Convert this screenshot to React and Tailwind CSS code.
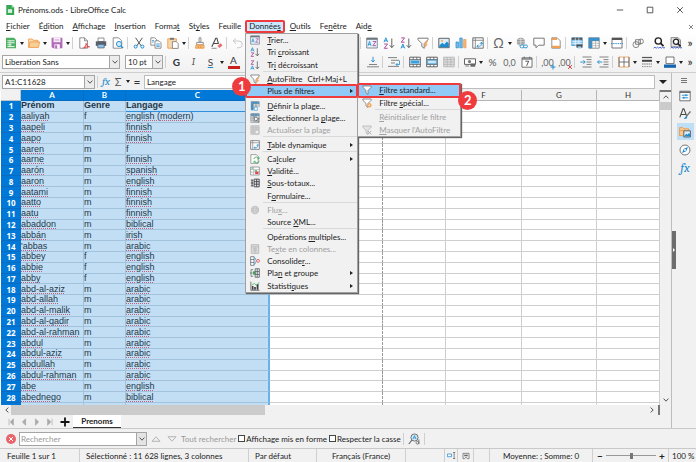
import { Fragment } from 'react'

const ROWS = [
  ['Prénom', 'Genre', 'Langage'],
  ['aaliyah', 'f', 'english (modern)'],
  ['aapeli', 'm', 'finnish'],
  ['aapo', 'm', 'finnish'],
  ['aaren', 'm', 'f'],
  ['aarne', 'm', 'finnish'],
  ['aarón', 'm', 'spanish'],
  ['aaron', 'm', 'english'],
  ['aatami', 'm', 'finnish'],
  ['aatto', 'm', 'finnish'],
  ['aatu', 'm', 'finnish'],
  ['abaddon', 'm', 'biblical'],
  ['abbán', 'm', 'irish'],
  ["'abbas", 'm', 'arabic'],
  ['abbey', 'f', 'english'],
  ['abbie', 'f', 'english'],
  ['abby', 'f', 'english'],
  ['abd-al-aziz', 'm', 'arabic'],
  ['abd-allah', 'm', 'arabic'],
  ['abd-al-malik', 'm', 'arabic'],
  ['abd-al-qadir', 'm', 'arabic'],
  ['abd-al-rahman', 'm', 'arabic'],
  ['abdul', 'm', 'arabic'],
  ['abdul-aziz', 'm', 'arabic'],
  ['abdullah', 'm', 'arabic'],
  ['abdul-rahman', 'm', 'arabic'],
  ['abe', 'm', 'english'],
  ['abednego', 'm', 'biblical'],
]

// the two columns under the open menu carry no letter
const COLS = ['A', 'B', 'C', '', '', 'F', 'G', 'H']
const COL_WIDTHS = ['w-[63px]', 'w-[42px]', 'w-[144px]', 'w-[113px]', 'w-[63px]', 'w-[76px]', 'w-[75px]', '']

const K = '#4a4a4a'
const B = '#1e8bcd'
const O = '#ee9b4b'

// small drawings on a 12x12 grid
const ICONS = {
  calc: <><path d="M1 .8h8l2 2v8.4H1z" fill="#4caf61" /><path d="M2.4 3.8h7.2M2.4 5.8h7.2M2.4 7.8h4M2.4 9.6h7.2" stroke="#fff" strokeWidth=".9" /><path d="M5 3.5V10" stroke="#fff" strokeWidth=".6" /></>,
  folder: <><path d="M.7 10.4V2h3.5l1 1.3h4.7v2" fill="#fbe1b9" stroke={O} strokeWidth=".9" /><path d="M.7 10.4 2 4.9h9.6L10.4 10.4z" fill="#f8cf95" stroke={O} strokeWidth=".9" /></>,
  save: <><path d="M.6.8h10.8v10.5H2L.6 10z" fill="#b269b8" /><path d="M2.6.8h6.8v4.4H2.6z" fill="#fff" /><path d="M3.4 7.3h5.4v4H3.4z" fill="#fff" /><path d="M4.3 8.4h1.6v2.9H4.3zM3.5 2.3h5M3.5 3.8h5" fill="#b269b8" stroke="#b269b8" strokeWidth=".5" /></>,
  pdf: <><path d="M1.8.8h4.7l3 3v7.4H1.8z" fill="#fff" stroke="#777" strokeWidth=".8" /><path d="M6.5.8v3h3" fill="none" stroke="#777" strokeWidth=".8" /><path d="M5.5 11c1.8-1 2.6-3 2.6-4.6.8 2.5 2 3.4 3.4 3.4-2 0-4 .2-6 1.2z" fill="none" stroke="#e2444a" strokeWidth="1" /></>,
  print: <><path d="M3 1h6v3.5H3z" fill="#fff" stroke="#777" strokeWidth=".8" /><path d="M.8 4.3h10.4v4.6H.8z" fill="#58606a" /><path d="M2.8 7.3h6.4v3.6H2.8z" fill="#8cc4ef" stroke="#58606a" strokeWidth=".8" /></>,
  preview: <><path d="M1.2.8h5.5l3 3v7.4H1.2z" fill="#fff" stroke="#777" strokeWidth=".8" /><circle cx="7" cy="7" r="2.6" fill="#d3e9f8" stroke={B} strokeWidth=".9" /><path d="m8.9 8.9 2.3 2.3" stroke={B} strokeWidth="1.2" /></>,
  cut: <><path d="M2.6.8 8.3 9M9.4.8 3.7 9" stroke="#555" strokeWidth="1" /><circle cx="2.6" cy="9.6" r="1.5" fill="none" stroke={B} strokeWidth="1" /><circle cx="9.4" cy="9.6" r="1.5" fill="none" stroke={B} strokeWidth="1" /></>,
  copy: <><path d="M.8.8h4l2 2v5.4h-6z" fill="#fff" stroke="#777" strokeWidth=".8" /><path d="M5 3.8h4l2 2v5.4H5z" fill="#fff" stroke="#777" strokeWidth=".8" /><path d="M6.3 6.9h3.4M6.3 8.2h3.4M6.3 9.5h3.4M2 3.5h2M2 5h2" stroke={B} strokeWidth=".7" /></>,
  paste: <><path d="M.8 1.8h8.6v9.4H.8z" fill="#f7d9b0" stroke={O} strokeWidth=".9" /><path d="M3 .8h4v2H3z" fill="#777" /><path d="M5.4 4.6h3.8l2 2v4.8H5.4z" fill="#fff" stroke="#777" strokeWidth=".8" /></>,
  brush: <><path d="M5.1.8h1.8v4.5H5.1z" fill="#fff" stroke="#777" strokeWidth=".8" /><path d="M2.7 5.4h6.6v2.4H2.7z" fill="#fff" stroke="#777" strokeWidth=".8" /><path d="M2 8h8v3.2H1.5z" fill="#f4ba79" stroke={O} strokeWidth=".9" /><path d="M4.5 8.8v2.2M6.7 8.8v2.2" stroke="#d8843a" strokeWidth=".6" /></>,
  clearFormat: <><path d="M.8 9.8 4.8 1.2h1.1l1.6 5.6M2.5 6.5h4.6" fill="none" stroke={K} strokeWidth="1.1" /><path d="m6.5 8.9 3-2.7 2 2-3 2.8z" fill="#e66a6e" /><path d="M.6 11.3h5" stroke={K} strokeWidth=".6" /></>,
  undo: <path d="M4 1.3 1.2 4 4 6.7M1.3 4h5.6a3.3 3.3 0 0 1 0 6.8H5" fill="none" stroke="#c8c8c8" strokeWidth="1" />,
  sort: <><path d="M.7 1h10.6v10H.7z" fill="#e8f2fa" stroke="#6c7780" strokeWidth=".8" /><path d="M.7 1h10.6v1.8H.7z" fill="#6c7780" /><path d="m2 8.8 1.5-4.4L5 8.8M2.5 7.4h2" fill="none" stroke={B} strokeWidth=".8" /><path d="M6.8 4.5H10L6.8 8.7H10" fill="none" stroke="#a43d92" strokeWidth=".8" /></>,
  sortAsc: <><path d="M1 5.2 2.9.8l1.8 4.4M1.6 3.8h2.5" fill="none" stroke={B} strokeWidth=".9" /><path d="M1.2 7h3.4l-3.4 4.3h3.4" fill="none" stroke="#a43d92" strokeWidth=".9" /><path d="M8.8 1.5v9M6.6 8.2l2.2 2.4L11 8.2" fill="none" stroke="#555" strokeWidth=".9" /></>,
  sortDesc: <><path d="M1.2.9h3.4L1.2 5.2h3.4" fill="none" stroke="#a43d92" strokeWidth=".9" /><path d="m1 11.4 1.9-4.4 1.8 4.4M1.6 10h2.5" fill="none" stroke={B} strokeWidth=".9" /><path d="M8.8 1.5v9M6.6 8.2l2.2 2.4L11 8.2" fill="none" stroke="#555" strokeWidth=".9" /></>,
  filter: <path d="M1 1.2h10v1.5L7.2 6.5v4.8L4.8 9.5v-3L1 2.7z" fill="#fff" stroke="#6b6b6b" strokeWidth=".9" />,
  autoFilter: <><path d="M1 1.2h10v1.5L7.2 6.5v4.8L4.8 9.5v-3L1 2.7z" fill="#fff" stroke="#6b6b6b" strokeWidth=".9" /><path d="m11.3 3.8-2.2 3.4h1.8L7.2 11.4 8.3 8H6.8l2.4-4.2z" fill="#f2a65c" /></>,
  specialFilter: <><path d="M1 1.2h10v1.5L7.2 6.5v4.8L4.8 9.5v-3L1 2.7z" fill="#fff" stroke="#6b6b6b" strokeWidth=".9" /><circle cx="8.8" cy="8.6" r="2.7" fill="#f2a65c" /><circle cx="8.8" cy="8.6" r=".9" fill="#fff" /></>,
  hideFilter: <><path d="M1 1.2h10v1.5L7.2 6.5v4.8L4.8 9.5v-3L1 2.7z" fill="#e2e2e2" stroke="#b3b3b3" strokeWidth=".9" /><path d="m7 7 4.2 4.2M11.2 7 7 11.2" stroke="#a8a8a8" strokeWidth="1.1" /></>,
  image: <><path d="M.8 1.3h10.4v9.4H.8z" fill="#dceefb" stroke="#555" strokeWidth=".9" /><path d="m1.3 8.5 3-2.8 2 1.8 2.5-3 2 2v3.7H1.3z" fill={B} /><circle cx="4" cy="3.8" r="1.1" fill="#f3b35b" /></>,
  chart: <><path d="M1 5h2.4v5.8H1z" fill="#7cbce8" stroke={B} strokeWidth=".7" /><path d="M4.8 1h2.4v9.8H4.8z" fill="#7cbce8" stroke={B} strokeWidth=".7" /><path d="M8.6 2.500H11v8.300H8.6z" fill="#f4b678" stroke={O} strokeWidth=".7" /></>,
  pivot: <><path d="M.8.8h10.4v10.4H.8z" fill="#fff" stroke="#666" strokeWidth=".9" /><path d="M.8 3.3h10.4M3.3.8v10.4" stroke="#777" strokeWidth=".8" /><path d="M5 9.2h2.6c1.5 0 1.8-1 1.8-3.6M8 6.8l1.4-1.6 1.3 1.6M6.3 7.8 4.9 9.2l1.4 1.4" fill="none" stroke={B} strokeWidth=".9" /></>,
  link: <><circle cx="4.8" cy="4.8" r="4" fill="#9a9a9a" /><path d="M.8 4.8h8M4.8.8v8M2 2.4h5.6M2 7.2h5.6" stroke="#fff" strokeWidth=".5" /><rect x="4.2" y="8" width="3.8" height="2.8" rx="1.3" fill="#fff" stroke={B} strokeWidth=".9" /><rect x="7.6" y="8" width="3.8" height="2.8" rx="1.3" fill="#fff" stroke={B} strokeWidth=".9" /></>,
  comment: <path d="M.8 1.2h10.4v7H5.6L3 10.8V8.2H.8z" fill="#fff" stroke="#6b6b6b" strokeWidth=".9" />,
  header: <><path d="M1.8.8h5.4l3 3v7.4H1.8z" fill="#fff" stroke="#777" strokeWidth=".8" /><path d="M2 .9h5v2H2zM2 8.8h8v2.2H2z" fill="#f0a050" /></>,
  printArea: <><path d="M.8.8h10.4v7.7H.8z" fill="#8fc7ee" stroke={B} strokeWidth=".7" /><path d="M.8.8h10.4v2H.8z" fill="#555" /><path d="M4.3.8v8M7.8.8v6M.8 4.7h10.4M.8 6.6h10.4" stroke="#fff" strokeWidth=".6" /><path d="M5.5 7.5h6v3.2h-6z" fill="#4a4a4a" /><path d="M6.8 9.3h3.4v2.2H6.8z" fill="#9dcff2" /></>,
  freeze: <><path d="M.8.8h10.4v10.4H.8z" fill="#fff" stroke="#777" strokeWidth=".8" /><path d="M.8.8h10.4v3.1H.8zM.8 3.9h3.3v7.3H.8z" fill="#2a93db" /><path d="M4.1.8v10.4M7.6.8v10.4M.8 3.9h10.4M.8 6.3h10.4M.8 8.7h10.4" stroke="#888" strokeWidth=".5" /></>,
  split: <><path d="M1 1h10v10H1z" fill="#fff" stroke="#6b6b6b" strokeWidth=".9" /><path d="M1 1h10v2H1z" fill="#555" /><path d="M0 6.6h12" stroke={B} strokeWidth=".9" strokeDasharray="1.4 .8" /></>,
  shapes: <><circle cx="4" cy="7.6" r="3" fill="none" stroke="#777" strokeWidth=".9" /><path d="M3.6 2.7h4.8v4.6H3.6z" fill="none" stroke="#777" strokeWidth=".9" /><circle cx="9" cy="4.4" r="2.4" fill="none" stroke="#777" strokeWidth=".9" /></>,
  find: <><circle cx="5.3" cy="4" r="3.1" fill="#fff" stroke="#222" strokeWidth="1.4" /><path d="m7.5 6.2 3 3" stroke="#222" strokeWidth="1.7" /><path d="m.6 11.2 1.3-1 1.3 1 1.3-1 1.3 1 1.3-1 1.3 1 1.3-1 1.3 1 1.2-1" fill="none" stroke="#3454c5" strokeWidth=".9" /></>,
  findPage: <><path d="M1 .6h7l2.5 2.5v6.8H1z" fill="#e2e2e2" stroke="#777" strokeWidth=".8" /><circle cx="6" cy="4.8" r="2.6" fill="#fff" stroke="#222" strokeWidth="1.3" /><path d="m7.8 6.6 2.8 2.8" stroke="#222" strokeWidth="1.5" /><path d="m.6 11.2 1.3-1 1.3 1 1.3-1 1.3 1 1.3-1 1.3 1 1.3-1 1.3 1 1.2-1" fill="none" stroke="#3454c5" strokeWidth=".9" /></>,
  alignBottom: <><path d="M0 10.8h12" stroke="#777" strokeWidth=".9" /><path d="M2 8.5h8" stroke="#777" strokeWidth=".9" /><path d="M6 .8v5M4.2 4.2 6 6l1.8-1.8" fill="none" stroke={B} strokeWidth=".9" /></>,
  wrap: <><path d="M0 1.6h9M3 4.3h8M3 7h4M0 10.4h11" stroke="#777" strokeWidth=".9" /><path d="M11.5 4.5v4H8M9.5 7 8 8.5 9.5 10" fill="none" stroke={B} strokeWidth=".8" /></>,
  mergeCenter: <><path d="M.7 1.2h10.6v9.6H.7z" fill="#fff" stroke="#555" strokeWidth=".9" /><path d="M.7 3.6h10.6M.7 8.4h10.6M4.2 1.2v2.4M7.8 1.2v2.4M4.2 8.4v2.4M7.8 8.4v2.4" stroke="#555" strokeWidth=".8" /><path d="M1.6 4.4h8.8v3.2H1.6z" fill="#3c9fe0" /></>,
  merge: <><path d="M.7 1.2h10.6v9.6H.7z" fill="#fff" stroke="#555" strokeWidth=".9" /><path d="M.7 3.6h10.6M.7 8.4h10.6M4.2 1.2v2.4M7.8 1.2v2.4M4.2 8.4v2.4M7.8 8.4v2.4" stroke="#555" strokeWidth=".8" /><path d="M1.6 4.2h8.8v3.6H1.6z" fill="#cde7f8" stroke={B} strokeWidth=".7" /></>,
  unmerge: <><path d="M.7 1.2h10.6v9.6H.7z" fill="#ddd" stroke="#b5b5b5" strokeWidth=".9" /><path d="M.7 3.6h10.6M.7 6h10.6M.7 8.4h10.6M4.2 1.2v9.6M7.8 1.2v9.6" stroke="#b5b5b5" strokeWidth=".8" /></>,
  currency: <><path d="M.5 2.8h11v5.6H.5z" fill="#fff" stroke="#555" strokeWidth=".9" /><circle cx="5.5" cy="5.6" r="1.6" fill="#777" /><path d="M6.5 7.5h4.7v3.2H6.5z" fill="#666" /><path d="M1.2 10h3.8" stroke="#777" strokeWidth=".9" /></>,
  date: <><path d="M1 1.8h10v9.4H1z" fill="#fff" stroke="#666" strokeWidth=".9" /><path d="M1 3h10" stroke="#666" strokeWidth="1.2" /><path d="M3.3.6v1.8M8.7.6v1.8" stroke="#666" strokeWidth=".9" /><path d="M4.3 5.2h3.4L5.6 9.8" fill="none" stroke="#444" strokeWidth=".9" /></>,
  indentMore: <><path d="M2.5 1h9M6.5 3.6h5M6.5 6h5M6.5 8.4h5M2.5 11h9" stroke="#777" strokeWidth=".9" /><path d="M.3 6h4.8M3.4 4.2 5.2 6 3.4 7.8" fill="none" stroke={B} strokeWidth=".9" /></>,
  indentLess: <><path d="M2.5 1h9M6.5 3.6h5M6.5 6h5M6.5 8.4h5M2.5 11h9" stroke="#777" strokeWidth=".9" /><path d="M.5 6h4.8M2.3 4.2.5 6l1.8 1.8" fill="none" stroke={B} strokeWidth=".9" /></>,
  borders: <><path d="M1 1h10v10H1z" fill="#fff" stroke={O} strokeWidth=".8" /><path d="M6 1v10M1 6h10M1 1v10M11 1v10" stroke="#666" strokeWidth=".9" /></>,
  lineStyle: <><path d="M1 1.5h10" stroke="#555" strokeWidth="1.2" /><path d="M1 4.8h10" stroke="#444" strokeWidth="2" /><path d="M1 8h10" stroke="#666" strokeWidth=".9" strokeDasharray="1.5 .7" /><path d="M1 10.6h10" stroke="#777" strokeWidth=".9" strokeDasharray="1 .7" /></>,
  borderColor: <><path d="M2 1h8v6.6H2z" fill="#fff" stroke="#666" strokeWidth=".9" /><path d="M0 8.5h12v3.3H0z" fill="#1665ad" /></>,
  range: <><path d="M1 .8h10v2.6H1z" fill="#3c9fe0" /><path d="M1 3.4h2.8v7.8H1z" fill="#3c9fe0" /><path d="M1 .8h10v6.4M3.8.8v10.4M7.2.8v6.4M1 3.4h10M1 6h9M1 8.6h4" fill="none" stroke="#6d7780" strokeWidth=".7" /><path d="M5.2 7.4h3.6v3.8H5.2z" fill="#fff" stroke={B} strokeWidth=".7" /></>,
  rangeSelect: <><path d="M1 .8h10v2.6H1z" fill="#58a9dd" /><path d="M1 .8h10v10.4H1zM3.8.8v10.4M7.2.8v10.4M1 3.4h10M1 6h10M1 8.6h10" fill="none" stroke="#6d7780" strokeWidth=".7" /><path d="m5 4.4 6 2.6-2.5.8 2 2.8-1 .7-2-2.8-1.5 1.8z" fill="#fff" stroke="#444" strokeWidth=".7" /></>,
  rangeRefresh: <><path d="M1 .8h10v10.4H1zM3.8.8v10.4M7.2.8v10.4M1 3.4h10M1 6h10M1 8.6h10" fill="#d5d5d5" stroke="#b9b9b9" strokeWidth=".8" /><circle cx="8.4" cy="8.4" r="2.5" fill="#eee" stroke="#b5b5b5" strokeWidth=".8" /></>,
  recalc: <><path d="M1 .8h6.8l2 2v8.4H1z" fill="#fff" stroke="#777" strokeWidth=".8" /><path d="M4.5 6a3.2 3.2 0 0 1 6-.5M10.8 3.8v2h-2M11 8.2a3.2 3.2 0 0 1-6 .6M4.8 10.8V8.7h2" fill="none" stroke="#3daf57" strokeWidth="1" /></>,
  validity: <><path d="M.8 1.2h10.4v9.6H.8z" fill="#fff" stroke="#777" strokeWidth=".8" /><path d="M.8 4.2h10.4M.8 7.4h10.4M4.2 1.2v9.6" stroke="#999" strokeWidth=".6" /><path d="M2 2.5h1.4M5.5 5.8h3" stroke="#3daf57" strokeWidth="1.3" /><path d="M6.2 6.6h4v3.2h-4z" fill="#dd484e" /></>,
  subtotal: <path d="M1 2.5h3M1 6h3M1 9.5h3M2.5 2.5v7M5 1.4h6v9.2H5zM5 4.4h6M5 7.4h6M8 1.4v9.2" fill="none" stroke="#3d4147" strokeWidth="1.1" />,
  stream: <><circle cx="6" cy="6" r="5" fill="#c2c2c2" /><path d="M1.5 6h9M6 1.5v9M2.5 3.4h7M2.5 8.6h7" stroke="#dedede" strokeWidth=".6" /></>,
  textCols: <><path d="M1.5.8h9v10.4h-9z" fill="#dcdcdc" stroke="#b4b4b4" strokeWidth="1" /><path d="M1.5 3.4h9M3.5 5.8h5M3.5 8.2h5M6 3.4v7.8" stroke="#b4b4b4" strokeWidth=".9" /></>,
  consolidate: <><path d="M.8.8h4v10.4h-4zM.8 4.2h4M.8 7.7h4" fill="#fff" stroke="#5c666f" strokeWidth=".9" /><path d="M5 1.6c1.8.4 1.5 3.5 3 4.2C6.6 6.5 6.8 9.8 5 10.2" fill="none" stroke={B} strokeWidth=".9" /><circle cx="9.7" cy="5.8" r="1.7" fill="#fff" stroke="#dd484e" strokeWidth="1" /></>,
  outline: <><path d="M3.8 2H1.2v8h2.6M0 6h3" fill="none" stroke="#5c666f" strokeWidth=".9" /><path d="M3.4 4h3v4h-3z" fill="#3daf57" /><path d="M6.2.9h5v10.2h-5zM6.2 4.3h5M6.2 7.7h5M8.7.9v10.2" fill="none" stroke="#4b5258" strokeWidth=".9" /></>,
  stats: <><path d="M1 .8v10.4h10.4" fill="none" stroke="#555" strokeWidth=".9" /><path d="M2.2 6h2v4.6h-2zM5 7.2h2v3.4H5zM8 3.5h2.2v7.1H8z" fill="#3d4147" /><path d="m2 5 3.3-2.2 2.4 2.6 3.4-4" fill="none" stroke="#3daf57" strokeWidth=".9" /></>,
  properties: <><path d="M.8 1.2h10.4v9.6H.8z" fill="#fff" stroke="#666" strokeWidth=".9" /><path d="M.8 2.2h10.4" stroke="#666" strokeWidth="1.5" /><path d="M2.8 5.2h6.4M2.8 7.8h6.4" stroke={B} strokeWidth=".9" /><path d="M7 4.2v2M4.8 6.8v2" stroke={B} strokeWidth="1.2" /></>,
  styles: <><path d="M.8 9.4 4 .9h.9l3 7.7M2 6.5h4.8" fill="none" stroke={K} strokeWidth="1.1" /><path d="m11.5 3.4-4.2 5" stroke="#777" strokeWidth="1.4" /><path d="M4.5 11c2.3.4 4-.2 3.6-2.4C6 8 6 10.4 4.5 11z" fill={B} /></>,
  gallery: <><path d="M.6 9.6V1.6h3.2l.9 1.2h5v2" fill="#f9cb94" stroke={O} strokeWidth=".9" /><path d="M.6 9.6v-5h5v5z" fill="#f9cb94" stroke={O} strokeWidth=".9" /><path d="M4.8 4.8h6.6v6.2H4.8z" fill="#dceefb" stroke="#555" strokeWidth=".9" /><path d="m5.3 10 2-2.2 1.2 1L10 7l1 1.2v2.3H5.3z" fill={B} /></>,
  navigator: <><circle cx="6" cy="6" r="5" fill="#fff" stroke="#777" strokeWidth="1" /><path d="M9 3 7.2 7.2 3 9l1.8-4.2z" fill={B} /><circle cx="6" cy="6" r="1" fill="#fff" /></>,
  findReplace: <><circle cx="6.5" cy="4.5" r="3.6" fill="#cfe6f7" stroke="#666" strokeWidth=".9" /><path d="M4 7 .8 11" stroke="#666" strokeWidth="1.2" /><path d="M5 6 6.5 2.6 8 6M5.6 4.9h1.9" fill="none" stroke={B} strokeWidth=".7" /><path d="M10.9 6.5v4.6M10.9 9.8a1.4 1.4 0 1 1 0-.2" fill="none" stroke="#555" strokeWidth=".8" /></>,
  insertMode: <><path d="M.5 4h5.5v3.6H.5z" fill="#fff" stroke={B} strokeWidth="1" /><path d="M8 2h3M8 10h3M9.5 2v8" stroke="#555" strokeWidth=".9" /></>,
  docSave: <><path d="M1.5 2h9v8h-2L6 8 3.5 10h-2z" fill="#f4f4f4" stroke="#555" strokeWidth="1" /><path d="M3.3 4h5.4v2.4H3.3z" fill="#666" /></>,
}

const TEXT_ICONS = {
  omega: { text: 'Ω', cls: 'text-[13px] text-[#666]' },
  bold: { text: 'G', cls: 'text-[10px] font-bold text-[#333]' },
  italic: { text: 'I', cls: 'text-[10px] italic font-serif text-[#555]' },
  underline: { text: 'S', cls: 'text-[10px] text-[#444] underline decoration-[#1e8bcd]' },
  fontColor: { text: 'A', cls: 'text-[10px] text-[#333] border-b-3 border-[#c9211e] w-[12px] text-center' },
  percent: { text: '%', cls: 'text-[10px] text-[#555]' },
  number: { text: '0,0', cls: 'text-[9px] text-[#666]' },
  addDecimal: { text: ',00', cls: 'text-[9px] text-[#666]', mark: 'M3 .5v5M.5 3h5', color: B },
  delDecimal: { text: ',00', cls: 'text-[9px] text-[#666]', mark: 'm1 1 4 4M5 1 1 5', color: '#dd484e' },
}

function Icon({ name, className = 'size-3' }) {
  return <svg viewBox="0 0 12 12" className={`${className} shrink-0`} aria-hidden="true">{ICONS[name]}</svg>
}

// '|' draws a separator, a trailing '+' adds a drop-down arrow
const BAR1_LEFT = ['calc+', 'folder+', 'save+', '|', 'pdf', 'print', 'preview', '|', 'cut', 'copy', 'paste+', '|', 'brush', 'clearFormat', '|', 'undo']
const BAR1_RIGHT = ['|', 'sort', 'sortAsc', 'sortDesc', 'autoFilter', '|', 'image', 'chart', 'pivot', '|', 'omega+', 'link', 'comment', 'header', '|', 'printArea', 'freeze+', 'split', '|', 'shapes', ' ', 'find', 'findPage']
const BAR2_LEFT = ['|', 'bold', 'italic', 'underline+', 'fontColor']
const BAR2_RIGHT = ['alignBottom', '|', 'wrap', '|', 'mergeCenter', 'merge', 'unmerge', '|', 'currency+', 'percent', 'number', 'date', '|', 'addDecimal', 'delDecimal', '|', 'indentMore', 'indentLess', '|', 'borders+', 'lineStyle+', 'borderColor+']

function Caret({ className = '' }) {
  return <span className={`h-0 w-0 border-x-2 border-t-3 border-x-transparent border-t-[#222] ${className}`} />
}

function ToolGroup({ items }) {
  return (
    <div className="flex shrink-0 items-center">
      {items.map((item, i) => {
        if (item === '|') return <span key={i} className="mx-[1px] h-3 w-[2px] border-l border-[#d0d0d0]" />
        if (item === ' ') return <span key={i} className="w-1" />
        const name = item.replace('+', '')
        const text = TEXT_ICONS[name]
        return (
          <Fragment key={i}>
            <button type="button" aria-label={name} className="relative flex h-4 w-[17px] shrink-0 items-center justify-center">
              {text ? <span className={`leading-[11px] ${text.cls}`}>{text.text}</span> : <Icon name={name} />}
              {text?.mark && <svg viewBox="0 0 6 6" className="absolute right-0 bottom-0 size-[6px]"><path d={text.mark} stroke={text.color} /></svg>}
            </button>
            {item.endsWith('+') && (
              <button type="button" aria-label={`${name} options`} className="flex h-4 w-[6px] items-center justify-center"><Caret /></button>
            )}
          </Fragment>
        )
      })}
    </div>
  )
}

// underscore goes before the access key
function Label({ text }) {
  const [before, after] = text.split('_')
  if (after === undefined) return text
  return <>{before}<span className="underline underline-offset-1">{after[0]}</span>{after.slice(1)}</>
}

const DATA_MENU = [
  { label: '_Trier...', icon: 'sort' },
  { label: 'Tri _croissant', icon: 'sortAsc' },
  { label: 'Tr_i décroissant', icon: 'sortDesc' },
  null,
  { label: '_AutoFiltre', icon: 'autoFilter', keys: 'Ctrl+Maj+L' },
  { label: 'Plus de filtres', arrow: true, open: true },
  null,
  { label: '_Définir la plage...', icon: 'range' },
  { label: 'Sélectionner la _plage...', icon: 'rangeSelect' },
  { label: 'Actualiser la plage', icon: 'rangeRefresh', disabled: true },
  null,
  { label: '_Table dynamique', icon: 'pivot', arrow: true },
  null,
  { label: 'Ca_lculer', icon: 'recalc', arrow: true },
  { label: '_Validité...', icon: 'validity' },
  { label: '_Sous-totaux...', icon: 'subtotal' },
  { label: 'F_ormulaire...' },
  null,
  { label: 'Flu_x...', icon: 'stream', disabled: true },
  { label: 'Source _XML...' },
  null,
  { label: 'Opérations _multiples...' },
  { label: 'Te_xte en colonnes...', icon: 'textCols', disabled: true },
  { label: 'Consolide_r...', icon: 'consolidate' },
  { label: 'Pla_n et groupe', icon: 'outline', arrow: true },
  { label: 'Statisti_ques', icon: 'stats', arrow: true },
]

const FILTER_MENU = [
  { label: '_Filtre standard...', icon: 'filter', open: true },
  { label: 'Filtre _spécial...', icon: 'specialFilter' },
  null,
  { label: '_Réinitialiser le filtre', disabled: true },
  { label: "_Masquer l'AutoFiltre", icon: 'hideFilter', disabled: true },
]

function Badge({ children, className }) {
  return <span className={`absolute z-10 flex size-[19px] items-center justify-center rounded-full bg-[#ef3b3d] text-[13px] font-bold text-white ${className}`}>{children}</span>
}

function Menu({ items, className, children }) {
  return (
    <ul className={`absolute flex flex-col border border-[#a0a0a0] bg-[#f1f1f1] shadow-[1px_1px_1px_#666] ${className}`}>
      {items.map((it, i) => it === null ? (
        <li key={i} className="ml-[17px] h-[2px] shrink-0 border-t border-[#dadada]" />
      ) : (
        <li key={i} className="relative flex min-h-0 flex-1">
          <button type="button" disabled={it.disabled}
            className={`flex w-full items-center whitespace-nowrap ${it.open ? 'bg-[#91c9f7]' : ''} ${it.disabled ? 'text-[#a0a0a0]' : 'text-[#222]'}`}>
            <span className="flex w-[21px] shrink-0 justify-center pr-1">{it.icon && <Icon name={it.icon} className="size-[10px]" />}</span>
            <span><Label text={it.label} /></span>
            {it.keys && <span className="ml-[5px]">{it.keys}</span>}
            {it.arrow && <span className="ml-auto mr-1 h-0 w-0 border-y-2 border-l-3 border-y-transparent border-l-[#222]" />}
          </button>
          {it.open && <span className="pointer-events-none absolute -inset-x-[1px] -inset-y-[1px] rounded-[2px] border-2 border-[#ef3b3d]" />}
          {it.open && it.arrow && children}
        </li>
      ))}
    </ul>
  )
}

const MENU_BAR = ['_Fichier', 'É_dition', '_Affichage', '_Insertion', 'Forma_t', 'St_yles', 'Feuille', 'Donnée_s', '_Outils', 'Fe_nêtre', 'Aid_e']

function MenuBar() {
  return (
    <nav className="flex h-[13px] shrink-0 items-center bg-white pl-[1px]">
      {MENU_BAR.map(m => (
        <div key={m} className="relative">
          {m === 'Donnée_s' ? (
            <>
              <button type="button" className="h-[13px] rounded-[2px] border-2 border-[#ef3b3d] bg-[#cce8ff] px-[2px] leading-[9px]"><Label text={m} /></button>
              <Menu items={DATA_MENU} className="top-full left-0 z-20 h-[260px] w-[113px]">
                <Menu items={FILTER_MENU} className="-top-[2px] left-full z-20 h-[54px] w-[104px]" />
                <Badge className="-top-[8px] -left-[14px]">1</Badge>
                <Badge className="top-[6px] -right-[120px] z-30">2</Badge>
              </Menu>
            </>
          ) : (
            <button type="button" className="h-[13px] pr-1 pl-[5px] leading-[13px]"><Label text={m} /></button>
          )}
        </div>
      ))}
      <button type="button" aria-label="Fermer le document" className="ml-auto mr-[2px]">
        <svg viewBox="0 0 6 6" className="size-[6px]"><path d="m1 1 4 4M5 1 1 5" stroke="#777" strokeWidth=".9" /></svg>
      </button>
    </nav>
  )
}

function Chevron({ className = '' }) {
  return <svg viewBox="0 0 6 4" className={`h-1 w-[6px] ${className}`} aria-hidden="true"><path d="m.6.6 2.4 2.6L5.4.6" fill="none" stroke="#555" strokeWidth="1" /></svg>
}

function Combo({ label, value, className }) {
  return (
    <div className={`flex h-[14px] shrink-0 items-stretch border border-[#a5a5a5] bg-white ${className}`}>
      <input aria-label={label} defaultValue={value} className="w-0 min-w-0 flex-1 pl-[2px] outline-none" />
      <button type="button" aria-label={`${label} : liste`} className="flex w-[10px] items-center justify-center border-l border-[#a5a5a5] bg-[#ececec]"><Chevron /></button>
    </div>
  )
}

function FormulaBar() {
  return (
    <div className="flex h-[17px] shrink-0 items-center bg-[#f1f1f1] pl-[2px]">
      <Combo label="Zone de nom" value="A1:C11628" className="w-[93px]" />
      <span className="ml-[2px] h-3 border-l border-[#d0d0d0]" />
      <button type="button" className="ml-[3px] w-[10px] font-serif text-[11px] leading-none text-[#1e8bcd] italic">fx</button>
      <button type="button" className="ml-[2px] w-[10px] text-[11px] leading-none text-[#555]">Σ</button>
      <Caret className="ml-[3px]" />
      <button type="button" className="ml-[3px] w-[8px] text-[12px] leading-none text-[#333]">=</button>
      <input aria-label="Ligne de saisie" defaultValue="Langage" className="ml-[3px] h-[14px] min-w-0 flex-1 border border-[#bdbdbd] bg-white pl-[2px] outline-none" />
      <button type="button" aria-label="Développer la barre de formule" className="flex w-4 justify-center">
        <span className="h-0 w-0 border-x-4 border-t-4 border-x-transparent border-t-[#222]" />
      </button>
    </div>
  )
}

function cellClass(c, r) {
  if (c === 3) return 'border-r [border-right-style:dashed] border-r-[#999] border-b-[#cfcfcf]'
  if (c > 3) return 'border-r border-[#cfcfcf]'
  if (c === 2) return r === 0 ? 'border-r-2 border-[#2d8fdd] bg-[#c2def4]' : 'border-r-2 border-r-[#69b1ea] border-b-[#a3c3dc] bg-[#c2def4]'
  return 'border-r border-[#a3c3dc] bg-[#c2def4]'
}

function Sheet() {
  return (
    <div className="flex min-h-0 flex-1 overflow-hidden pl-[1px]">
      <table className="h-full min-w-0 flex-1 table-fixed border-separate border-spacing-0 bg-white">
        <colgroup>
          <col className="w-[20px]" />
          {COL_WIDTHS.map((w, i) => <col key={i} className={w} />)}
        </colgroup>
        <thead>
          <tr className="h-[11px]">
            <td className="border-r border-b border-[#c4c4c4] bg-[#f1f1f1] p-0" />
            {COLS.map((c, i) => (
              <th key={i} className={`border-r border-b p-0 leading-[9px] ${i < 3 ? 'border-[#0a6cc0] bg-[#0078d7] font-bold text-white' : 'border-[#b5b5b5] bg-[#f1f1f1] font-normal text-[#333]'}`}>{c}</th>
            ))}
          </tr>
        </thead>
        <tbody className="font-['Liberation_Sans',sans-serif] text-[9px]">
          {ROWS.map((row, r) => (
            <tr key={r}>
              <th className="border-b border-[#0a6cc0] bg-[#0078d7] p-0 text-center font-['Noto_Sans',sans-serif] text-[8px] leading-[9px] font-bold text-white">{r + 1}</th>
              {COLS.map((_, i) => (
                <td key={i} className={`border-b p-0 leading-[9px] whitespace-nowrap text-[#24384a] ${r === 0 ? 'font-bold' : ''} ${cellClass(i, r)}`}>
                  {r > 0 && row[i] && row[i].length > 1
                    ? <span className="underline decoration-[#c0607a] decoration-dotted decoration-1 underline-offset-1">{row[i]}</span>
                    : row[i]}
                </td>
              ))}
            </tr>
          ))}
          <tr className="h-[2px]">
            <th className="bg-[#0078d7] p-0" />
            {COLS.map((_, i) => <td key={i} className={`p-0 ${cellClass(i, 1)}`} />)}
          </tr>
        </tbody>
      </table>
      <div className="flex w-[11px] shrink-0 flex-col items-center bg-[#f1f1f1]">
        <button type="button" aria-label="Défiler vers le haut" className="flex h-[12px] w-full items-center justify-center border-t-2 border-[#777]"><Chevron className="rotate-180" /></button>
        <span className="h-2 w-full bg-[#cbcbcb]" />
        <button type="button" aria-label="Défiler vers le bas" className="mt-auto flex h-[11px] w-full items-center justify-center"><Chevron /></button>
      </div>
    </div>
  )
}

function SheetTabs() {
  return (
    <>
      <div className="flex h-[10px] shrink-0 items-center bg-[#f1f1f1] pl-[2px]">
        <button type="button" aria-label="Défiler à gauche" className="flex w-[9px] justify-center"><Chevron className="rotate-90" /></button>
        <span className="h-full w-[254px] bg-[#cbcbcb]" />
        <button type="button" aria-label="Défiler à droite" className="ml-auto flex w-[10px] justify-center"><Chevron className="-rotate-90" /></button>
        <span className="mr-[11px] ml-[1px] h-full w-[2px] bg-[#777]" />
      </div>
      <div className="flex h-[13px] shrink-0 items-stretch bg-[#f1f1f1] pl-1">
        {['M2.5 1v8M8 1v8L4 5z', 'M7 1v8L3 5z', 'M3 1v8l4-4z', 'M2 1v8l4-4zM7.5 1v8'].map((d, i) => (
          <button key={i} type="button" aria-label={`Feuille : navigation ${i + 1}`} className="flex w-[13px] items-center justify-center">
            <svg viewBox="0 0 10 10" className="size-2"><path d={d} fill="#aaa" stroke="#aaa" strokeWidth=".9" /></svg>
          </button>
        ))}
        <button type="button" aria-label="Ajouter une feuille" className="flex w-[17px] items-center justify-center">
          <svg viewBox="0 0 10 10" className="size-[10px]"><path d="M5 .5v9M.5 5h9" stroke="#111" strokeWidth="1.8" /></svg>
        </button>
        <button type="button" className="w-12 border-b border-[#333] bg-white text-center font-bold leading-[12px]">Prenoms</button>
      </div>
    </>
  )
}

function Sidebar() {
  return (
    <aside className="relative flex w-[25px] shrink-0 flex-col items-center gap-[1px] border-l border-[#bdbdbd] bg-[#f1f1f1] pt-[3px]">
      <button type="button" aria-label="Paramètres du volet" className="mb-[2px] flex h-2 flex-col justify-center gap-[1px]">
        <span className="h-px w-[6px] bg-[#777]" /><span className="h-px w-[6px] bg-[#777]" /><span className="h-px w-[6px] bg-[#777]" />
      </button>
      {['properties', 'styles', 'gallery', 'navigator'].map(n => (
        <button key={n} type="button" aria-label={n} className={`ml-[2px] flex size-[17px] items-center justify-center ${n === 'gallery' ? 'bg-[#bfdff7]' : ''}`}>
          <Icon name={n} />
        </button>
      ))}
      <button type="button" className="ml-[2px] size-[17px] font-serif text-[13px] leading-none text-[#1e8bcd] italic">fx</button>
      <button type="button" aria-label="Masquer le volet" className="absolute top-[158px] left-0 flex h-[38px] w-1 items-center justify-center bg-[#6d6d6d]">
        <span className="h-0 w-0 border-y-2 border-l-2 border-y-transparent border-l-white" />
      </button>
    </aside>
  )
}

function FindBar() {
  return (
    <div className="flex h-5 shrink-0 items-center border-t border-[#c9c9c9] bg-[#f1f1f1] pl-[6px] whitespace-nowrap">
      <button type="button" aria-label="Fermer la recherche" className="mr-[3px] flex size-[10px] items-center justify-center rounded-full bg-[#e8636a]">
        <svg viewBox="0 0 6 6" className="size-[6px]"><path d="m1 1 4 4M5 1 1 5" stroke="#fff" strokeWidth="1" /></svg>
      </button>
      <div className="flex h-[14px] w-[128px] items-stretch border border-[#a5a5a5] bg-white">
        <input aria-label="Rechercher" placeholder="Rechercher" className="w-0 min-w-0 flex-1 pl-[1px] outline-none placeholder:text-[#999]" />
        <button type="button" aria-label="Recherches récentes" className="flex w-[10px] items-center justify-center border-l border-[#a5a5a5] bg-[#e4e4e4]"><Chevron /></button>
      </div>
      <button type="button" aria-label="Précédent" className="ml-1 w-[10px]"><svg viewBox="0 0 10 6" className="h-[6px] w-[10px]"><path d="M1 5.3 5 .8l4 4.5z" fill="none" stroke="#b5b5b5" /></svg></button>
      <button type="button" aria-label="Suivant" className="ml-[6px] w-[10px]"><svg viewBox="0 0 10 6" className="h-[6px] w-[10px]"><path d="M1 .7 5 5.2 9 .7z" fill="none" stroke="#b5b5b5" /></svg></button>
      <button type="button" className="ml-1 text-left text-[#999]">Tout rechercher</button>
      <label className="ml-[2px] flex items-center gap-[1px]"><input type="checkbox" className="size-[7px] shrink-0 appearance-none border border-[#444] bg-white" />Affichage mis en forme</label>
      <label className="ml-[2px] flex items-center gap-[1px]"><input type="checkbox" className="size-[7px] shrink-0 appearance-none border border-[#444] bg-white" />Respecter la casse</label>
      <span className="ml-[2px] h-3 border-l border-[#cfcfcf]" />
      <button type="button" aria-label="Rechercher et remplacer" className="mx-1"><Icon name="findReplace" /></button>
      <span className="h-3 border-l border-[#cfcfcf]" />
    </div>
  )
}

function StatusBar() {
  return (
    <footer className="flex h-[14px] shrink-0 items-stretch border-t border-[#c9c9c9] bg-[#f1f1f1] leading-[14px] whitespace-nowrap *:border-[#cfcfcf]">
      <span className="w-[80px] border-r pl-[7px]">Feuille 1 sur 1</span>
      <span className="w-[169px] border-r pl-[6px]">Sélectionné : 11 628 lignes, 3 colonnes</span>
      <span className="w-[68px] border-r pl-[6px]">Par défaut</span>
      <span className="w-[89px] border-r text-center">Français (France)</span>
      <span className="w-[39px] border-r" />
      <span className="flex w-[13px] items-center justify-center border-r"><Icon name="insertMode" className="size-[9px]" /></span>
      <span className="flex w-4 items-center justify-center border-r"><Icon name="docSave" className="size-[8px]" /></span>
      <span className="w-4 border-r" />
      <span className="min-w-0 flex-1 border-r text-center">Moyenne: ; Somme: 0</span>
      <span className="flex w-[76px] items-center gap-[3px] border-r pl-1">
        <button type="button" className="w-[6px] text-[10px] font-bold leading-none">−</button>
        <input type="range" aria-label="Zoom" defaultValue="50" className="h-2 w-[50px] appearance-none bg-[linear-gradient(#999,#999)] bg-[length:100%_1px] bg-center bg-no-repeat [&::-webkit-slider-thumb]:h-[6px] [&::-webkit-slider-thumb]:w-[3px] [&::-webkit-slider-thumb]:appearance-none [&::-webkit-slider-thumb]:bg-[#777]" />
        <button type="button" className="w-[6px] text-[10px] font-bold leading-none">+</button>
      </span>
      <span className="w-[27px] pl-[3px]">100 %</span>
    </footer>
  )
}

export default function App() {
  return (
    <div className="flex h-screen flex-col overflow-hidden bg-white font-['Lato','Noto_Sans',sans-serif] text-[8px] text-[#222]">
      <header className="flex h-5 shrink-0 items-center bg-white pl-[5px]">
        <svg viewBox="0 0 12 12" className="size-[10px]" aria-hidden="true">
          <path d="M1.5 0H8l3 3v9H1.5z" fill="#35a853" /><path d="M8 0v3h3z" fill="#a5dbb3" /><path d="M3.5 5h5v4.5h-5z" fill="#d9f0df" />
        </svg>
        <h1 className="ml-[3px] leading-none">Prénoms.ods - LibreOffice Calc</h1>
        <div className="ml-auto flex">
          {['M1 5h8', 'M1.5 1.5h7v7h-7z', 'M1.5 1.5l7 7M8.5 1.5l-7 7'].map((d, i) => (
            <button key={d} type="button" aria-label={['Réduire', 'Agrandir', 'Fermer'][i]} className="flex w-[30px] justify-center pr-[2px]">
              <svg viewBox="0 0 10 10" className="size-2"><path d={d} fill="none" stroke="#444" strokeWidth="1.1" /></svg>
            </button>
          ))}
        </div>
      </header>
      <MenuBar />
      <div className="shrink-0 border-b border-[#cfcfcf] bg-linear-to-b from-white to-[#f1f1f1] pb-[1px]">
        <div className="flex h-5 items-center justify-between pl-[2px]">
          <ToolGroup items={BAR1_LEFT} />
          <div className="flex items-center"><ToolGroup items={BAR1_RIGHT} /><button type="button" className="w-[12px] text-[12px] leading-none">»</button></div>
        </div>
        <div className="flex h-[18px] items-center justify-between pl-[2px]">
          <div className="flex items-center">
            <Combo label="Nom de police" value="Liberation Sans" className="w-[118px]" />
            <Combo label="Taille" value="10 pt" className="ml-[5px] mr-[1px] w-[38px]" />
            <ToolGroup items={BAR2_LEFT} />
          </div>
          <div className="flex items-center"><ToolGroup items={BAR2_RIGHT} /><button type="button" className="w-[12px] text-[12px] leading-none">»</button></div>
        </div>
      </div>
      <div className="flex min-h-0 flex-1">
        <main className="flex min-w-0 flex-1 flex-col">
          <FormulaBar />
          <Sheet />
          <SheetTabs />
        </main>
        <Sidebar />
      </div>
      <FindBar />
      <StatusBar />
    </div>
  )
}
